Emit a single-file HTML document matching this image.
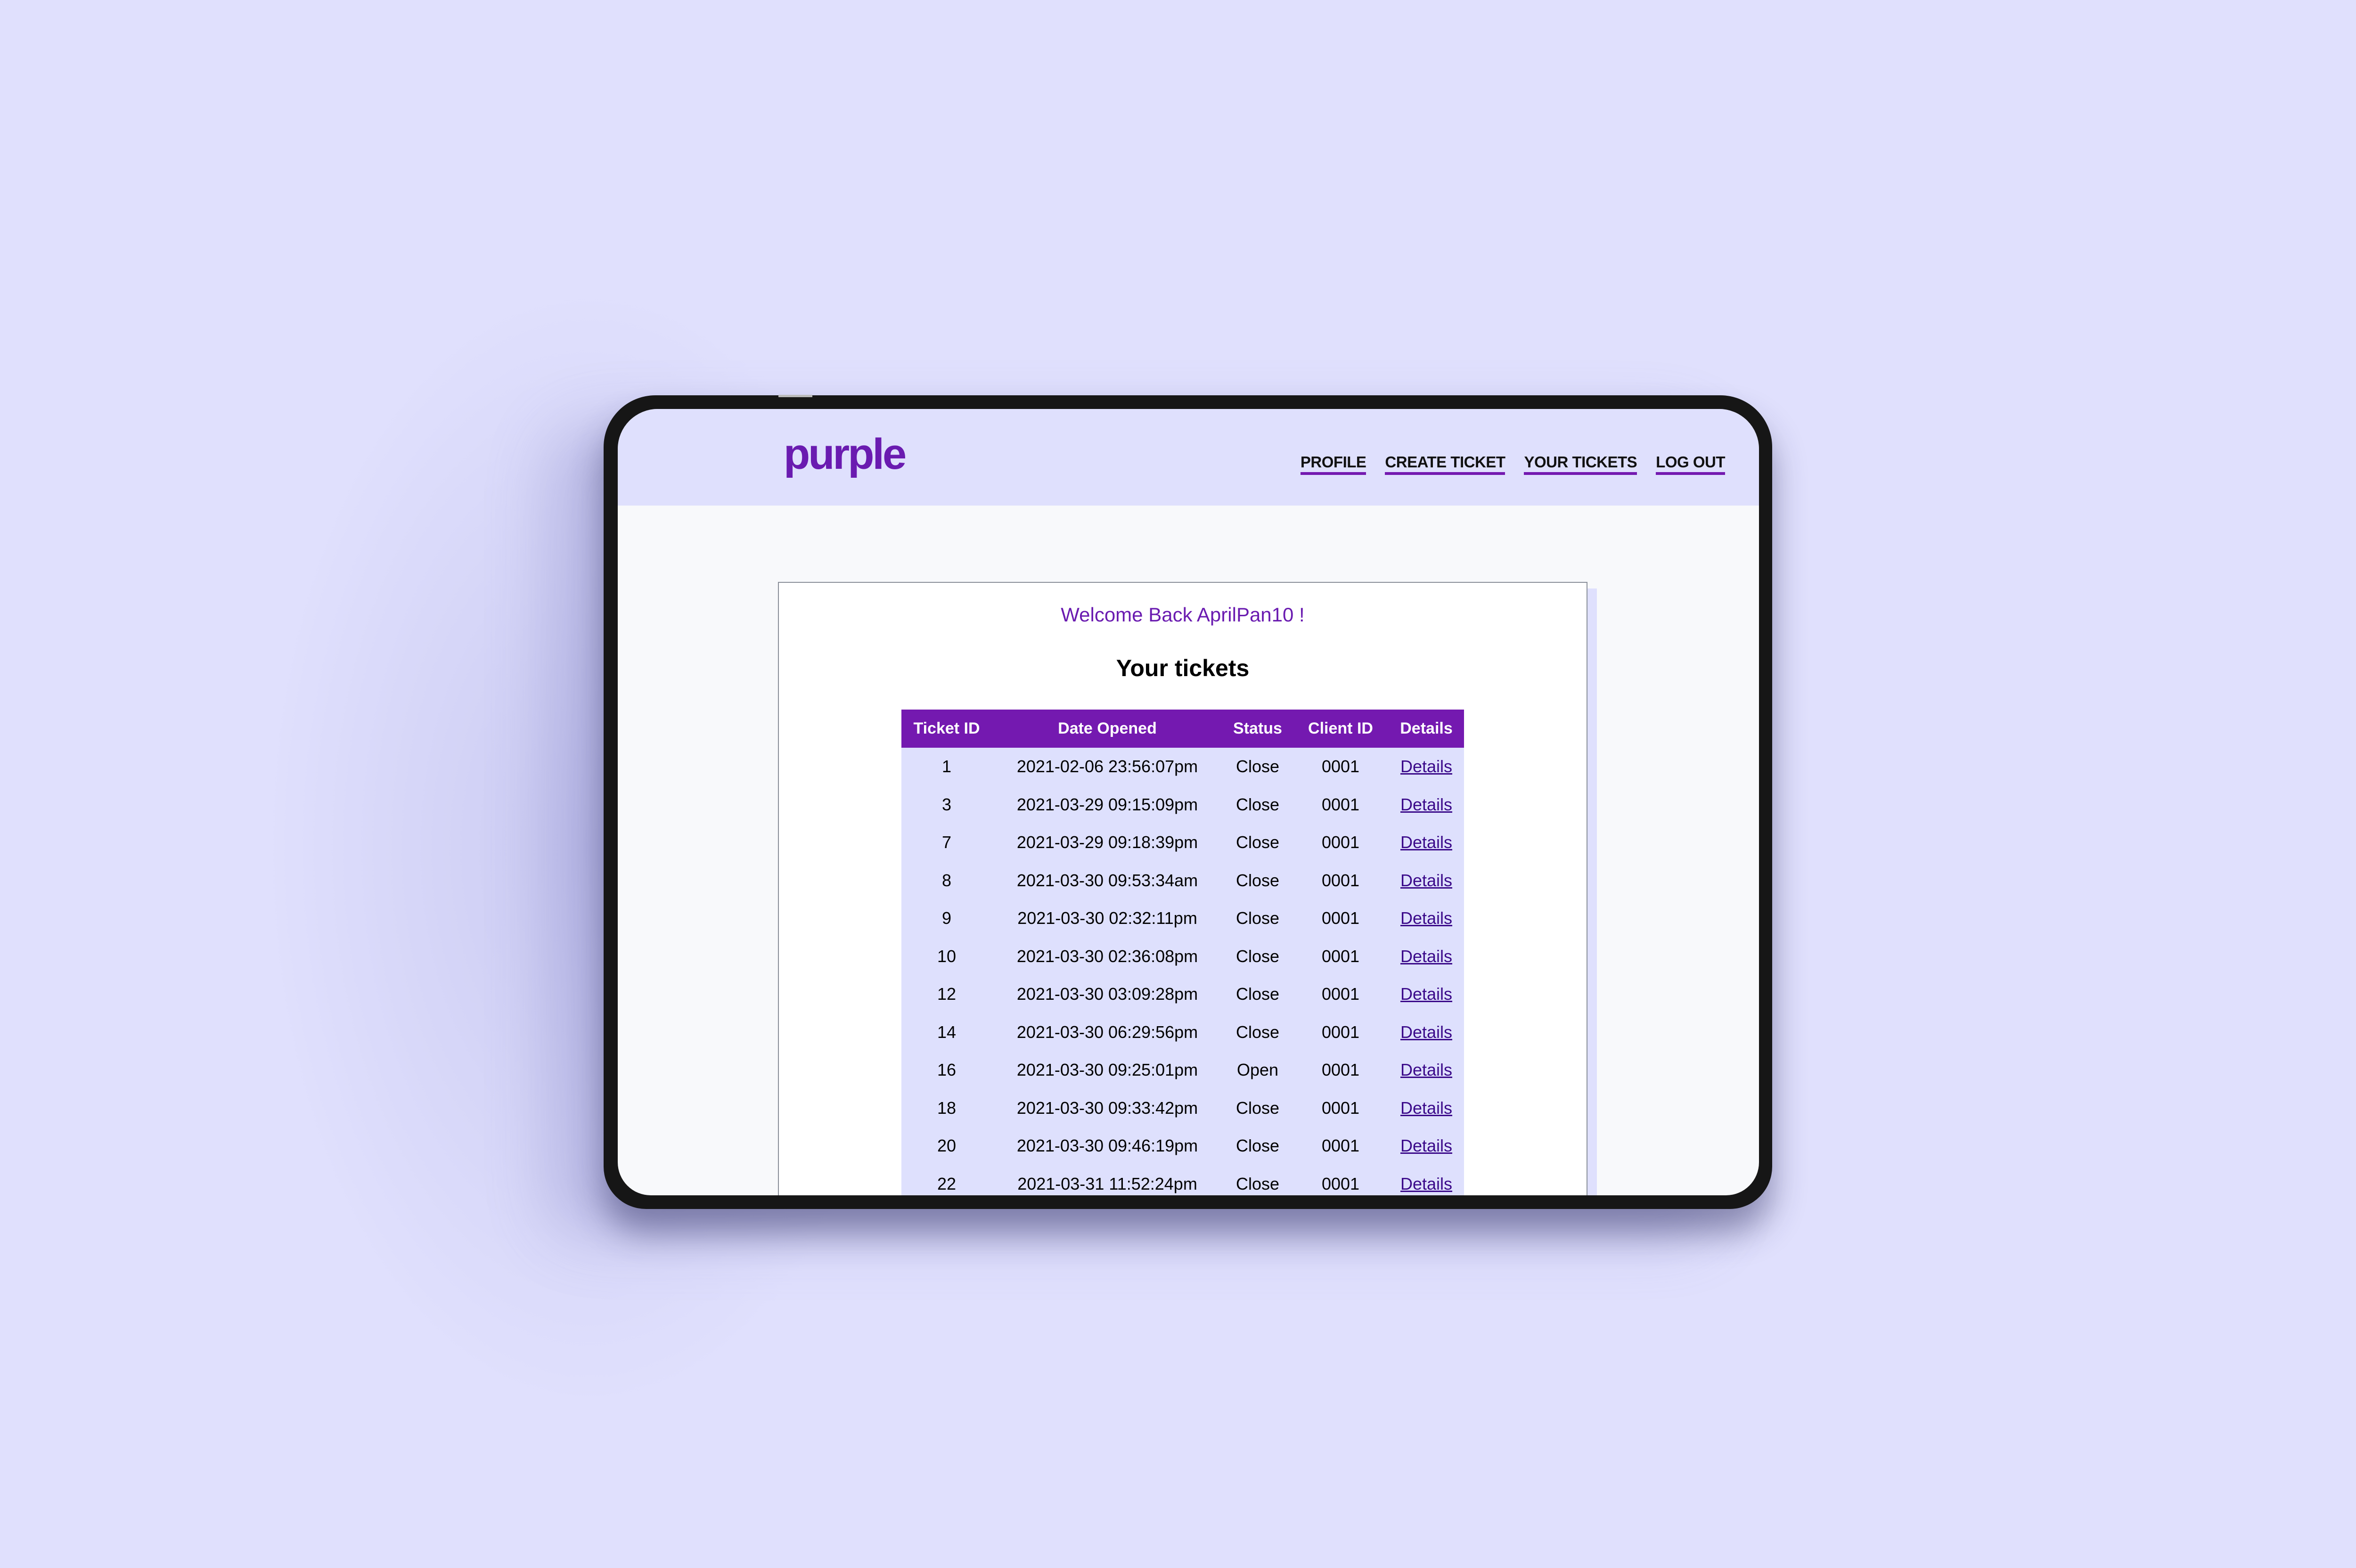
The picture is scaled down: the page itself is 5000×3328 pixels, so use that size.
<!DOCTYPE html>
<html><head><meta charset="utf-8"><style>
*{margin:0;padding:0;box-sizing:border-box}
body{width:5000px;height:3328px;background:#e0e0fd;position:relative;overflow:hidden;font-family:"Liberation Sans",sans-serif}
.glow{position:absolute;left:500px;top:500px;width:1500px;height:2600px;border-radius:50%;background:radial-gradient(ellipse at center,rgba(180,180,230,.5),rgba(224,224,253,0) 65%)}
.frame{position:absolute;left:1281px;top:839px;width:2480px;height:1727px;background:#161616;border-radius:110px 110px 90px 90px;box-shadow:0 50px 70px rgba(40,40,90,.45),-120px 60px 220px rgba(120,120,190,.3)}
.notch{position:absolute;left:1652px;top:838px;width:72px;height:5px;background:#bbb}
.screen{position:absolute;left:1311px;top:868px;width:2422px;height:1669px;background:#f8f9fb;border-radius:85px 85px 70px 70px;overflow:hidden}
.hdr{position:absolute;left:0;top:0;width:100%;height:205px;background:#dfe0fd}
.logo{position:absolute;left:352px;top:44px;font-size:92px;font-weight:bold;color:#6a1bb0;letter-spacing:-4px}
.nav{position:absolute;right:72px;top:94px;display:flex;gap:40px}
.nav span{font-size:33px;font-weight:bold;color:#111;border-bottom:6px solid #7419b0;padding-bottom:2px;letter-spacing:-0.5px}
.cardsh{position:absolute;left:360px;top:381px;width:1718px;height:1400px;background:#dfe0fd}
.card{position:absolute;left:340px;top:367px;width:1718px;height:1400px;background:#fff;border:2px solid #8a8f99}
.wel{position:absolute;left:0;width:100%;top:44px;text-align:center;color:#6a1bb0;font-size:42px}
.yt{position:absolute;left:0;width:100%;top:152px;text-align:center;color:#000;font-size:50px;font-weight:bold}
table{position:absolute;left:260px;top:269px;width:1194px;border-collapse:collapse;background:#dee0fd}
th{background:#7419b0;color:#fff;height:81px;font-size:34px;font-weight:bold}
td{height:80.5px;font-size:36px;text-align:center;color:#000}
td a{color:#3b0a8a;text-decoration:underline;text-decoration-thickness:3px}
</style></head><body>
<div class="glow"></div>
<div class="frame"></div>
<div class="notch"></div>
<div class="screen">
<div class="hdr"><div class="logo">purple</div>
<div class="nav"><span>PROFILE</span><span>CREATE TICKET</span><span>YOUR TICKETS</span><span>LOG OUT</span></div></div>
<div class="cardsh"></div>
<div class="card">
<div class="wel">Welcome Back AprilPan10 !</div>
<div class="yt">Your tickets</div>
<table>
<colgroup><col style="width:192px"><col style="width:490px"><col style="width:148px"><col style="width:204px"><col style="width:160px"></colgroup>
<tr><th>Ticket ID</th><th>Date Opened</th><th>Status</th><th>Client ID</th><th>Details</th></tr>
<tr><td>1</td><td>2021-02-06 23:56:07pm</td><td>Close</td><td>0001</td><td><a>Details</a></td></tr>
<tr><td>3</td><td>2021-03-29 09:15:09pm</td><td>Close</td><td>0001</td><td><a>Details</a></td></tr>
<tr><td>7</td><td>2021-03-29 09:18:39pm</td><td>Close</td><td>0001</td><td><a>Details</a></td></tr>
<tr><td>8</td><td>2021-03-30 09:53:34am</td><td>Close</td><td>0001</td><td><a>Details</a></td></tr>
<tr><td>9</td><td>2021-03-30 02:32:11pm</td><td>Close</td><td>0001</td><td><a>Details</a></td></tr>
<tr><td>10</td><td>2021-03-30 02:36:08pm</td><td>Close</td><td>0001</td><td><a>Details</a></td></tr>
<tr><td>12</td><td>2021-03-30 03:09:28pm</td><td>Close</td><td>0001</td><td><a>Details</a></td></tr>
<tr><td>14</td><td>2021-03-30 06:29:56pm</td><td>Close</td><td>0001</td><td><a>Details</a></td></tr>
<tr><td>16</td><td>2021-03-30 09:25:01pm</td><td>Open</td><td>0001</td><td><a>Details</a></td></tr>
<tr><td>18</td><td>2021-03-30 09:33:42pm</td><td>Close</td><td>0001</td><td><a>Details</a></td></tr>
<tr><td>20</td><td>2021-03-30 09:46:19pm</td><td>Close</td><td>0001</td><td><a>Details</a></td></tr>
<tr><td>22</td><td>2021-03-31 11:52:24pm</td><td>Close</td><td>0001</td><td><a>Details</a></td></tr>
<tr><td>24</td><td>2021-04-01 10:02:11am</td><td>Close</td><td>0001</td><td><a>Details</a></td></tr>
</table>
</div>
</div>
</body></html>
